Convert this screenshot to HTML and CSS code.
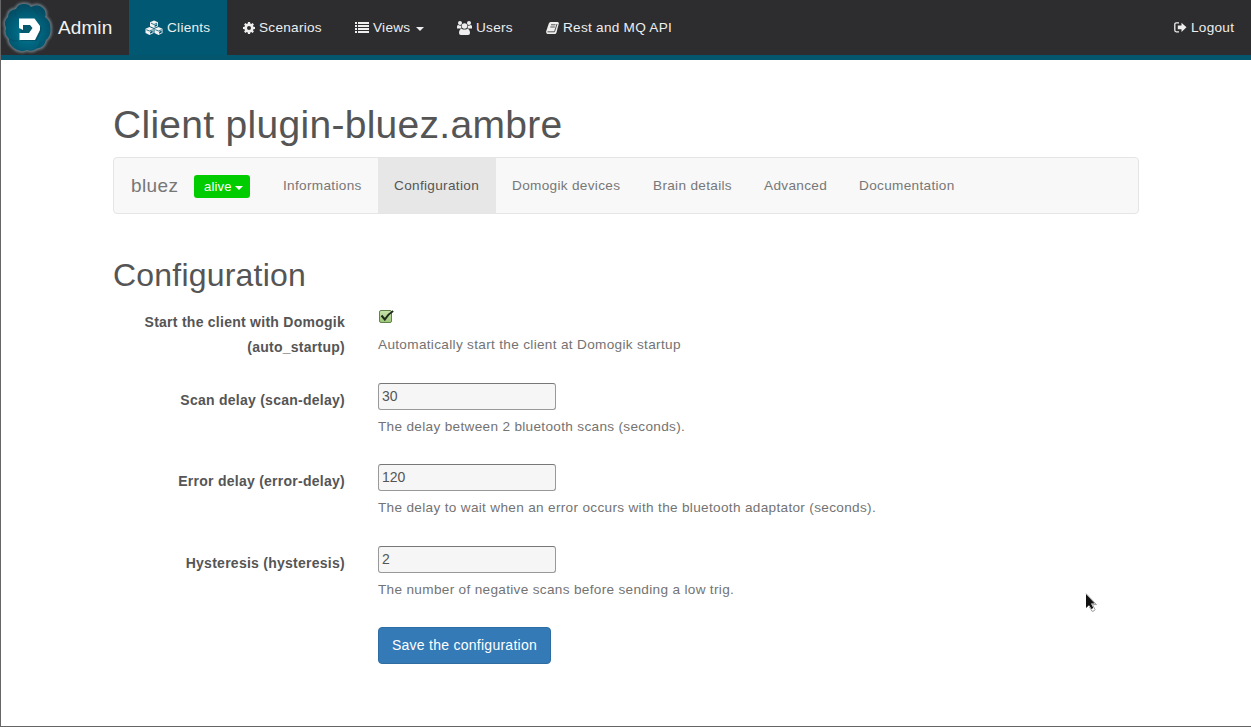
FILE: index.html
```html
<!DOCTYPE html>
<html lang="en">
<head>
<meta charset="utf-8">
<title>Domogik Admin</title>
<link rel="stylesheet" href="styles.css">
</head>
<body>
<div class="window">
<header class="topbar">
  <a class="brand">
    <svg class="logo" width="54" height="55" viewBox="0 0 54 55">
      <defs>
        <radialGradient id="cloud" cx=".5" cy=".6" r=".55"><stop offset="0" stop-color="#007d96"/><stop offset=".6" stop-color="#00617b"/><stop offset="1" stop-color="#034e66"/></radialGradient>
        <filter id="glow" x="-20%" y="-20%" width="140%" height="140%"><feGaussianBlur stdDeviation="1.200"/></filter>
      </defs>
      <path filter="url(#glow)" fill="#5f7078" stroke="#68777e" stroke-width="3.500" d="M15 9Q17 3.500 24 4Q28 4 30 7Q37 3 42 8Q46 12 44 17Q50 21 49.500 29Q50 36 45 40Q43 48 36 48.500Q31 52 26 50Q19 53 13 48Q7 43 8 39Q3 34 5 28Q2 21 7 17Q7 10 15 9Z"/>
      <path fill="url(#cloud)" d="M15 9Q17 3.500 24 4Q28 4 30 7Q37 3 42 8Q46 12 44 17Q50 21 49.500 29Q50 36 45 40Q43 48 36 48.500Q31 52 26 50Q19 53 13 48Q7 43 8 39Q3 34 5 28Q2 21 7 17Q7 10 15 9Z"/>
      <path fill="none" stroke="#064b60" opacity=".7" d="M8 39Q13 42 17 41M30 7Q36 10 37 15M15 9Q13 13 15 17M36 48Q40 44 39 41"/>
      <path fill="#093e4e" opacity=".5" d="M19 20h15l6.500 8v3l-5 10H20v-6z"/>
      <path fill="#fff" d="M18 18.500h15.500L39 26v4l-5 10H18.500v-7H28l3.500-5-2.500-3H22v5l-4-2z"/>
    </svg>
    <span>Admin</span>
  </a>
  <nav class="mainnav">
    <a class="item clients active"><svg width="18" height="16" viewBox="0 0 18 16"><path fill="#f2f2f2" d="M9 .5l4 1.700v4L9 8.100 5 6.200v-4zM4.500 7l4 1.800v4.200l-4 2-4-2V8.800zM13.500 7l4 1.800v4.200l-4 2-4-2V8.800z"/><path fill="none" stroke="#005873" stroke-width=".8" d="M5.800 3.100L9 4.500l3.200-1.400M1.300 9.700L4.500 11l3.300-1.300M10.300 9.700l3.200 1.300 3.300-1.300"/><path fill="#005873" d="M9.600 5.200l2.600-1.100v1.700L9.600 7zM5.100 11.700l2.600-1.100v1.900l-2.600 1.300zM14.100 11.700l2.600-1.100v1.900l-2.600 1.300z"/></svg><span>Clients</span></a>
    <a class="item scenarios"><svg width="12" height="12" viewBox="0 0 12 12"><path fill="#eee" fill-rule="evenodd" d="M5 0h2l.3 1.600 1 .4 1.300-.9 1.300 1.300-.9 1.300.4 1L12 5v2l-1.600.3-.4 1 .9 1.300-1.300 1.300-1.300-.9-1 .4L7 12H5l-.3-1.600-1-.4-1.300.9-1.300-1.300.9-1.300-.4-1L0 7V5l1.600-.3.4-1-.9-1.300 1.300-1.300 1.300.9 1-.4zM6 4a2 2 0 1 0 0 4a2 2 0 0 0 0-4z"/></svg><span>Scenarios</span></a>
    <a class="item views"><svg width="14" height="11" viewBox="0 0 14 11"><path fill="#eee" d="M0 0h2v2H0zM3 0h11v2H3zM0 3h2v2H0zM3 3h11v2H3zM0 6h2v2H0zM3 6h11v2H3zM0 9h2v2H0zM3 9h11v2H3z"/></svg><span>Views</span><i class="caret"></i></a>
    <a class="item users"><svg width="15" height="14" viewBox="0 0 15 14"><g fill="#eee"><circle cx="3" cy="2" r="2"/><circle cx="12" cy="2" r="2"/><path d="M0 7.500V5.500Q0 4 1.200 4Q3 5 4.200 4.500Q4 6.500 4.500 7.500zM15 7.500V5.500Q15 4 13.800 4Q12 5 10.800 4.500Q11 6.500 10.500 7.500z"/><circle cx="7.500" cy="5" r="2.800"/><path d="M4.500 7.700Q7.500 9.500 10.500 7.700Q13 8.500 13 12Q13 14 11 14H4Q2 14 2 12Q2 8.500 4.500 7.700z"/></g></svg><span>Users</span></a>
    <a class="item api"><svg width="13" height="12" viewBox="0 0 13 12"><path fill="#eee" d="M4.700 0h7Q13 .2 12.800 1.500L10.500 10.500Q10 12 8.700 12H1.500Q-.2 11.500.2 9.300L2.800 1.500Q3.300 0 4.700 0z"/><path fill="none" stroke="#2d2d2f" stroke-width=".8" d="M5 2.800h4.500M4.300 5h4.500M1.500 9.800h7L11 2"/></svg><span>Rest and MQ API</span></a>
  </nav>
  <a class="item logout"><svg width="13" height="11" viewBox="0 0 13 11"><path fill="none" stroke="#eee" stroke-width="1.300" d="M5 .8H2.300Q.8.8.8 2.300v6Q.8 9.800 2.300 9.800H5"/><path fill="#eee" d="M3.800 3.500h3.700V.7L12.500 5.300 7.500 10V7.200H3.800z"/></svg><span>Logout</span></a>
</header>

<main class="container">
  <h1>Client plugin-bluez.ambre</h1>
  <nav class="subnav">
    <span class="plugin">bluez</span>
    <button class="status">alive<i class="caret"></i></button>
    <a class="tab info">Informations</a>
    <a class="tab config current">Configuration</a>
    <a class="tab devices">Domogik devices</a>
    <a class="tab brain">Brain details</a>
    <a class="tab advanced">Advanced</a>
    <a class="tab docs">Documentation</a>
  </nav>
  <h2>Configuration</h2>
  <form class="form">
    <div class="row first">
      <label>Start the client with Domogik<br>(auto_startup)</label>
      <div class="field">
        <svg class="check" width="17" height="15" viewBox="0 0 17 15"><defs><linearGradient id="green" x2="0" y2="1"><stop stop-color="#c9e3ae"/><stop offset="1" stop-color="#9cc777"/></linearGradient></defs><rect x="1.500" y="1.500" width="12" height="12" rx="1.500" fill="url(#green)" stroke="#60834c"/><path fill="none" stroke="#202a1c" stroke-width="2" d="M3.500 6.500L6.800 10.500Q10 5 15.200 2"/></svg>
        <p class="help">Automatically start the client at Domogik startup</p>
      </div>
    </div>
    <div class="row">
      <label>Scan delay (scan-delay)</label>
      <div class="field"><input type="text" value="30"><p class="help">The delay between 2 bluetooth scans (seconds).</p></div>
    </div>
    <div class="row">
      <label>Error delay (error-delay)</label>
      <div class="field"><input type="text" value="120"><p class="help">The delay to wait when an error occurs with the bluetooth adaptator (seconds).</p></div>
    </div>
    <div class="row">
      <label>Hysteresis (hysteresis)</label>
      <div class="field"><input type="text" value="2"><p class="help">The number of negative scans before sending a low trig.</p></div>
    </div>
    <button class="save" type="button">Save the configuration</button>
  </form>
</main>
<svg class="cursor" width="15" height="20" viewBox="0 0 15 20"><path fill="#111" d="M2 1v14l3-2.800L7.500 16l1.800-1-2.300-4.400h3.700z"/><path fill="none" stroke="#888" stroke-width=".8" d="M2 .5L12.500 11.600H8.500L11 16.500Q10.500 18.500 8 18.300L5.500 14"/></svg>
</div>
</body>
</html>
```
FILE: styles.css
```css
* { box-sizing: border-box; }
body { margin: 0; font-family: "Liberation Sans", Arial, sans-serif; font-size: 13.6px; color: #555; background: #fff; }
.window { position: relative; height: 727px; border-left: 1px solid #666; border-bottom: 1px solid #666; overflow: hidden; }
.topbar { display: flex; height: 60px; background: #2d2d2f; border-bottom: 5px solid #04566f; }
.brand { display: flex; align-items: center; width: 128px; gap: 3px; font-size: 19px; letter-spacing: 0.1px; color: #f2f2f2; }
.mainnav { display: flex; flex: 1; }
.item { display: flex; align-items: center; color: #eee; padding-left: 16px; letter-spacing: 0.27px; white-space: nowrap; }
.item svg { flex: none; }
.clients { width: 98px; gap: 4px; }
.scenarios { width: 112px; gap: 4px; }
.views { width: 102px; gap: 4px; }
.users { width: 88px; gap: 4px; }
.api { width: 160px; gap: 4px; padding-left: 17px; }
.logout { width: 77px; padding-left: 0; gap: 4px; }
.active { background: #005873; }
.caret { width: 0; height: 0; border: 4px solid transparent; border-top-color: currentColor; border-bottom: 0; }
.views .caret { margin: 2px 0 0 2px; }
.container { margin: 0 112px; }
h1, h2, p { margin: 0; font-weight: normal; }
h1 { padding-top: 43px; font-size: 39px; line-height: 43px; letter-spacing: 0.29px; height: 97px; }
.subnav { display: flex; align-items: stretch; height: 57px; background: #f8f8f8; border: 1px solid #e5e5e5; border-radius: 4px; color: #777; }
.plugin { width: 80px; padding-left: 17px; font-size: 19px; line-height: 55px; letter-spacing: 0.4px; }
.status { display: flex; align-items: center; gap: 3px; width: 56px; height: 23px; margin: 17px 17px 0 0; padding: 0 0 0 10px; border: 0; border-radius: 3px; background: #00cc00; color: #fff; font: 13px "Liberation Sans", Arial, sans-serif; letter-spacing: 0.2px; }
.status .caret { margin-top: 3px; }
.tab { padding-left: 16px; line-height: 55px; letter-spacing: 0.32px; white-space: nowrap; }
.info { width: 111px; }
.config { width: 118px; }
.devices { width: 141px; }
.brain { width: 111px; }
.advanced { width: 95px; }
.docs { width: 128px; }
.current { background: #e7e7e7; color: #555; }
h2 { margin-top: 44px; font-size: 32px; line-height: 35px; letter-spacing: 0.2px; }
.form { padding-top: 17px; }
.row { display: flex; gap: 33px; height: 81.3px; }
.first { height: 73px; }
label { width: 232px; padding-top: 5px; text-align: right; font-size: 14px; font-weight: bold; line-height: 25px; letter-spacing: 0.26px; }
.first label { padding-top: 0; }
.field { flex: 1; }
.check { display: block; margin: -1px 0 10px; }
.help { color: #737373; line-height: 22px; letter-spacing: 0.32px; }
input { display: block; width: 178px; height: 27px; margin-bottom: 6px; padding: 0 3px 1px; border: 1px solid #999; border-top-color: #777; border-radius: 3px; background: #f6f6f6; color: #555; font: 14px "Liberation Sans", Arial, sans-serif; }
.save { display: block; width: 173px; height: 37px; margin-left: 265px; padding: 0 0 1px; border: 1px solid #2e6da4; border-radius: 4px; background: #337ab7; color: #fff; font: 14px "Liberation Sans", Arial, sans-serif; letter-spacing: 0.26px; }
.cursor { position: absolute; left: 1083px; top: 593px; }
```
